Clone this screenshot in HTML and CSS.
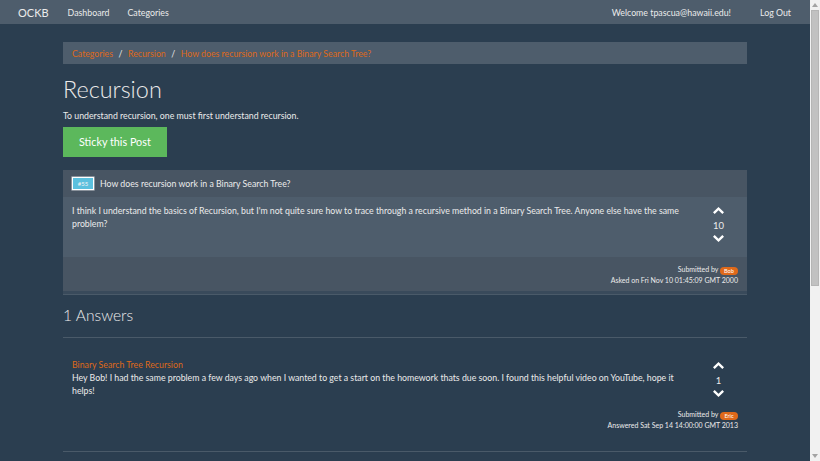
FILE: index.html
```html
<!DOCTYPE html>
<html lang="en">
<head>
<meta charset="utf-8">
<title>OCKB - Recursion</title>
<link rel="stylesheet" href="styles.css">
</head>
<body>
<div class="page">
  <nav class="navbar">
    <a class="brand" href="#">OCKB</a>
    <a class="nav-link" href="#">Dashboard</a>
    <a class="nav-link" href="#">Categories</a>
    <span class="spacer"></span>
    <span class="nav-link">Welcome tpascua@hawaii.edu!</span>
    <a class="nav-link logout" href="#">Log Out</a>
  </nav>

  <main class="container">
    <ol class="breadcrumb">
      <li><a href="#">Categories</a></li>
      <li class="sep">/</li>
      <li><a href="#">Recursion</a></li>
      <li class="sep">/</li>
      <li><a href="#">How does recursion work in a Binary Search Tree?</a></li>
    </ol>

    <h1 class="title">Recursion</h1>
    <p class="lead-text">To understand recursion, one must first understand recursion.</p>
    <button class="btn-success">Sticky this Post</button>

    <section class="panel">
      <div class="panel-heading">
        <span class="id-badge">#55</span>
        <span class="post-title">How does recursion work in a Binary Search Tree?</span>
      </div>
      <div class="panel-body">
        <div class="post-text">I think I understand the basics of Recursion, but I'm not quite sure how to trace through a recursive method in a Binary Search Tree. Anyone else have the same problem?</div>
        <div class="votes">
          <div class="vote-item"><svg class="chev" width="11" height="7" viewBox="0 0 11 7"><polygon points="5.5,0 11,5.2 9.3,6.9 5.5,3.3 1.7,6.9 0,5.2"/></svg></div>
          <div class="vote-item vote-num">10</div>
          <div class="vote-item"><svg class="chev" width="11" height="7" viewBox="0 0 11 7"><polygon points="5.5,7 11,1.8 9.3,0.1 5.5,3.7 1.7,0.1 0,1.8"/></svg></div>
        </div>
      </div>
      <div class="panel-footer">
        <div>Submitted by <span class="user-badge">Bob</span></div>
        <div>Asked on Fri Nov 10 01:45:09 GMT 2000</div>
      </div>
    </section>

    <hr class="rule rule-top">
    <h3 class="answers-title">1 Answers</h3>
    <hr class="rule rule-mid">

    <section class="answer">
      <div class="answer-body">
        <div class="post-text">
          <div class="answer-title">Binary Search Tree Recursion</div>
          Hey Bob! I had the same problem a few days ago when I wanted to get a start on the homework thats due soon. I found this helpful video on YouTube, hope it helps!
        </div>
        <div class="votes">
          <div class="vote-item"><svg class="chev" width="11" height="7" viewBox="0 0 11 7"><polygon points="5.5,0 11,5.2 9.3,6.9 5.5,3.3 1.7,6.9 0,5.2"/></svg></div>
          <div class="vote-item vote-num">1</div>
          <div class="vote-item"><svg class="chev" width="11" height="7" viewBox="0 0 11 7"><polygon points="5.5,7 11,1.8 9.3,0.1 5.5,3.7 1.7,0.1 0,1.8"/></svg></div>
        </div>
      </div>
      <div class="answer-footer">
        <div>Submitted by <span class="user-badge">Eric</span></div>
        <div>Answered Sat Sep 14 14:00:00 GMT 2013</div>
      </div>
    </section>

    <hr class="rule rule-bottom">
  </main>
</div>
<div class="scrollbar">
  <div class="sb-arrow"><svg width="6" height="4" viewBox="0 0 6 4"><polygon points="3,0 6,4 0,4"/></svg></div>
  <div class="sb-track"><div class="sb-thumb"></div></div>
  <div class="sb-arrow"><svg width="6" height="4" viewBox="0 0 6 4"><polygon points="0,0 6,0 3,4"/></svg></div>
</div>
</body>
</html>
```

FILE: styles.css
```css
html, body {
  margin: 0;
  padding: 0;
  height: 461px;
  overflow: hidden;
}

body {
  display: flex;
  background: #2b3e50;
  color: #ebebeb;
  font-family: Lato, "Helvetica Neue", "Liberation Sans", Arial, sans-serif;
  font-size: 8.75px;
  line-height: 13px;
}

a {
  color: #df691a;
  text-decoration: none;
}

.page {
  flex: 1;
  min-width: 0;
  height: 461px;
  overflow: hidden;
}

/* navbar */
.navbar {
  height: 24px;
  background: #4e5d6c;
  display: flex;
  align-items: center;
  padding: 0 19px 0 18px;
}

.brand {
  color: #ebebeb;
  font-size: 11px;
  margin-right: 19px;
}

.nav-link {
  color: #ebebeb;
  font-size: 8.8px;
  margin-right: 18px;
}

.nav-link.logout {
  margin-right: 0;
  margin-left: 11px;
}

.spacer {
  flex: 1;
}

/* container */
.container {
  width: 684px;
  margin: 0 auto;
}

.breadcrumb {
  list-style: none;
  margin: 18px 0 0;
  padding: 0 9px;
  height: 22px;
  line-height: 23px;
  background: #4e5d6c;
  display: flex;
}

.breadcrumb li.sep {
  padding: 0 5.5px;
  color: #ebebeb;
}

.title {
  font-size: 23.4px;
  font-weight: 300;
  line-height: 1.1;
  margin: 13px 0 6px;
}

.lead-text {
  margin: 0 0 5px;
}

.btn-success {
  display: block;
  background: #5cb85c;
  color: #fff;
  border: 0;
  font-family: inherit;
  font-size: 10.8px;
  line-height: 14px;
  padding: 8px 16px 8.5px;
  cursor: pointer;
}

/* question panel */
.panel {
  margin-top: 12.5px;
  border-bottom: 3px solid #394a5b;
}

.panel-heading {
  height: 27px;
  background: #485563;
  display: flex;
  align-items: center;
  padding: 0 9px;
  gap: 6px;
}

.id-badge {
  box-sizing: border-box;
  width: 22px;
  height: 13px;
  background: #5bc0de;
  border: 1px solid #fff;
  box-shadow: 0 0 0 0.6px rgba(255, 255, 255, 0.6);
  color: #f4f4f4;
  font-size: 6px;
  line-height: 11px;
  text-align: center;
  margin-top: 1px;
}

.panel-body {
  background: #4e5d6c;
  display: flex;
  padding: 7px 9px 11px;
}

.post-text {
  width: 609px;
  margin-right: 18px;
}

.votes {
  width: 39px;
  text-align: center;
  color: #ebebeb;
  font-size: 9.5px;
}

.vote-item {
  height: 14px;
  display: flex;
  align-items: center;
  justify-content: center;
}

.vote-num {
  padding-top: 2px;
  box-sizing: border-box;
}

.chev {
  fill: #fff;
  display: block;
}

.panel-footer {
  background: #485563;
  text-align: right;
  padding: 7px 9px 6px;
  font-size: 7px;
  line-height: 10px;
}

.user-badge {
  display: inline-block;
  background: #df691a;
  color: #fff;
  font-size: 5.6px;
  line-height: 8px;
  height: 8px;
  width: 18px;
  text-align: center;
  border-radius: 4px;
  vertical-align: -1px;
}

/* rules */
.rule {
  border: 0;
  border-top: 1px solid #4a5a69;
  margin: 0;
}

.answers-title {
  font-size: 15.6px;
  font-weight: 300;
  line-height: 1.1;
  margin: 12.3px 0 12.5px;
}

/* answer */
.answer {
  padding: 20.5px 9px 0;
}

.answer-body {
  display: flex;
}

.answer-title {
  color: #df691a;
}

.answer-footer {
  text-align: right;
  padding-top: 8.5px;
  font-size: 7px;
  line-height: 10px;
}

.rule-bottom {
  margin-top: 21.5px;
}

/* scrollbar */
.scrollbar {
  width: 10px;
  height: 461px;
  background: #f1f1f1;
  display: flex;
  flex-direction: column;
}

.sb-arrow {
  height: 10px;
  display: flex;
  align-items: center;
  justify-content: center;
  fill: #a3a3a3;
}

.sb-track {
  flex: 1;
  padding: 0 1px;
}

.sb-thumb {
  height: 276px;
  background: #c1c1c1;
  border: 1px solid #b5b5b5;
  box-sizing: border-box;
}
```
